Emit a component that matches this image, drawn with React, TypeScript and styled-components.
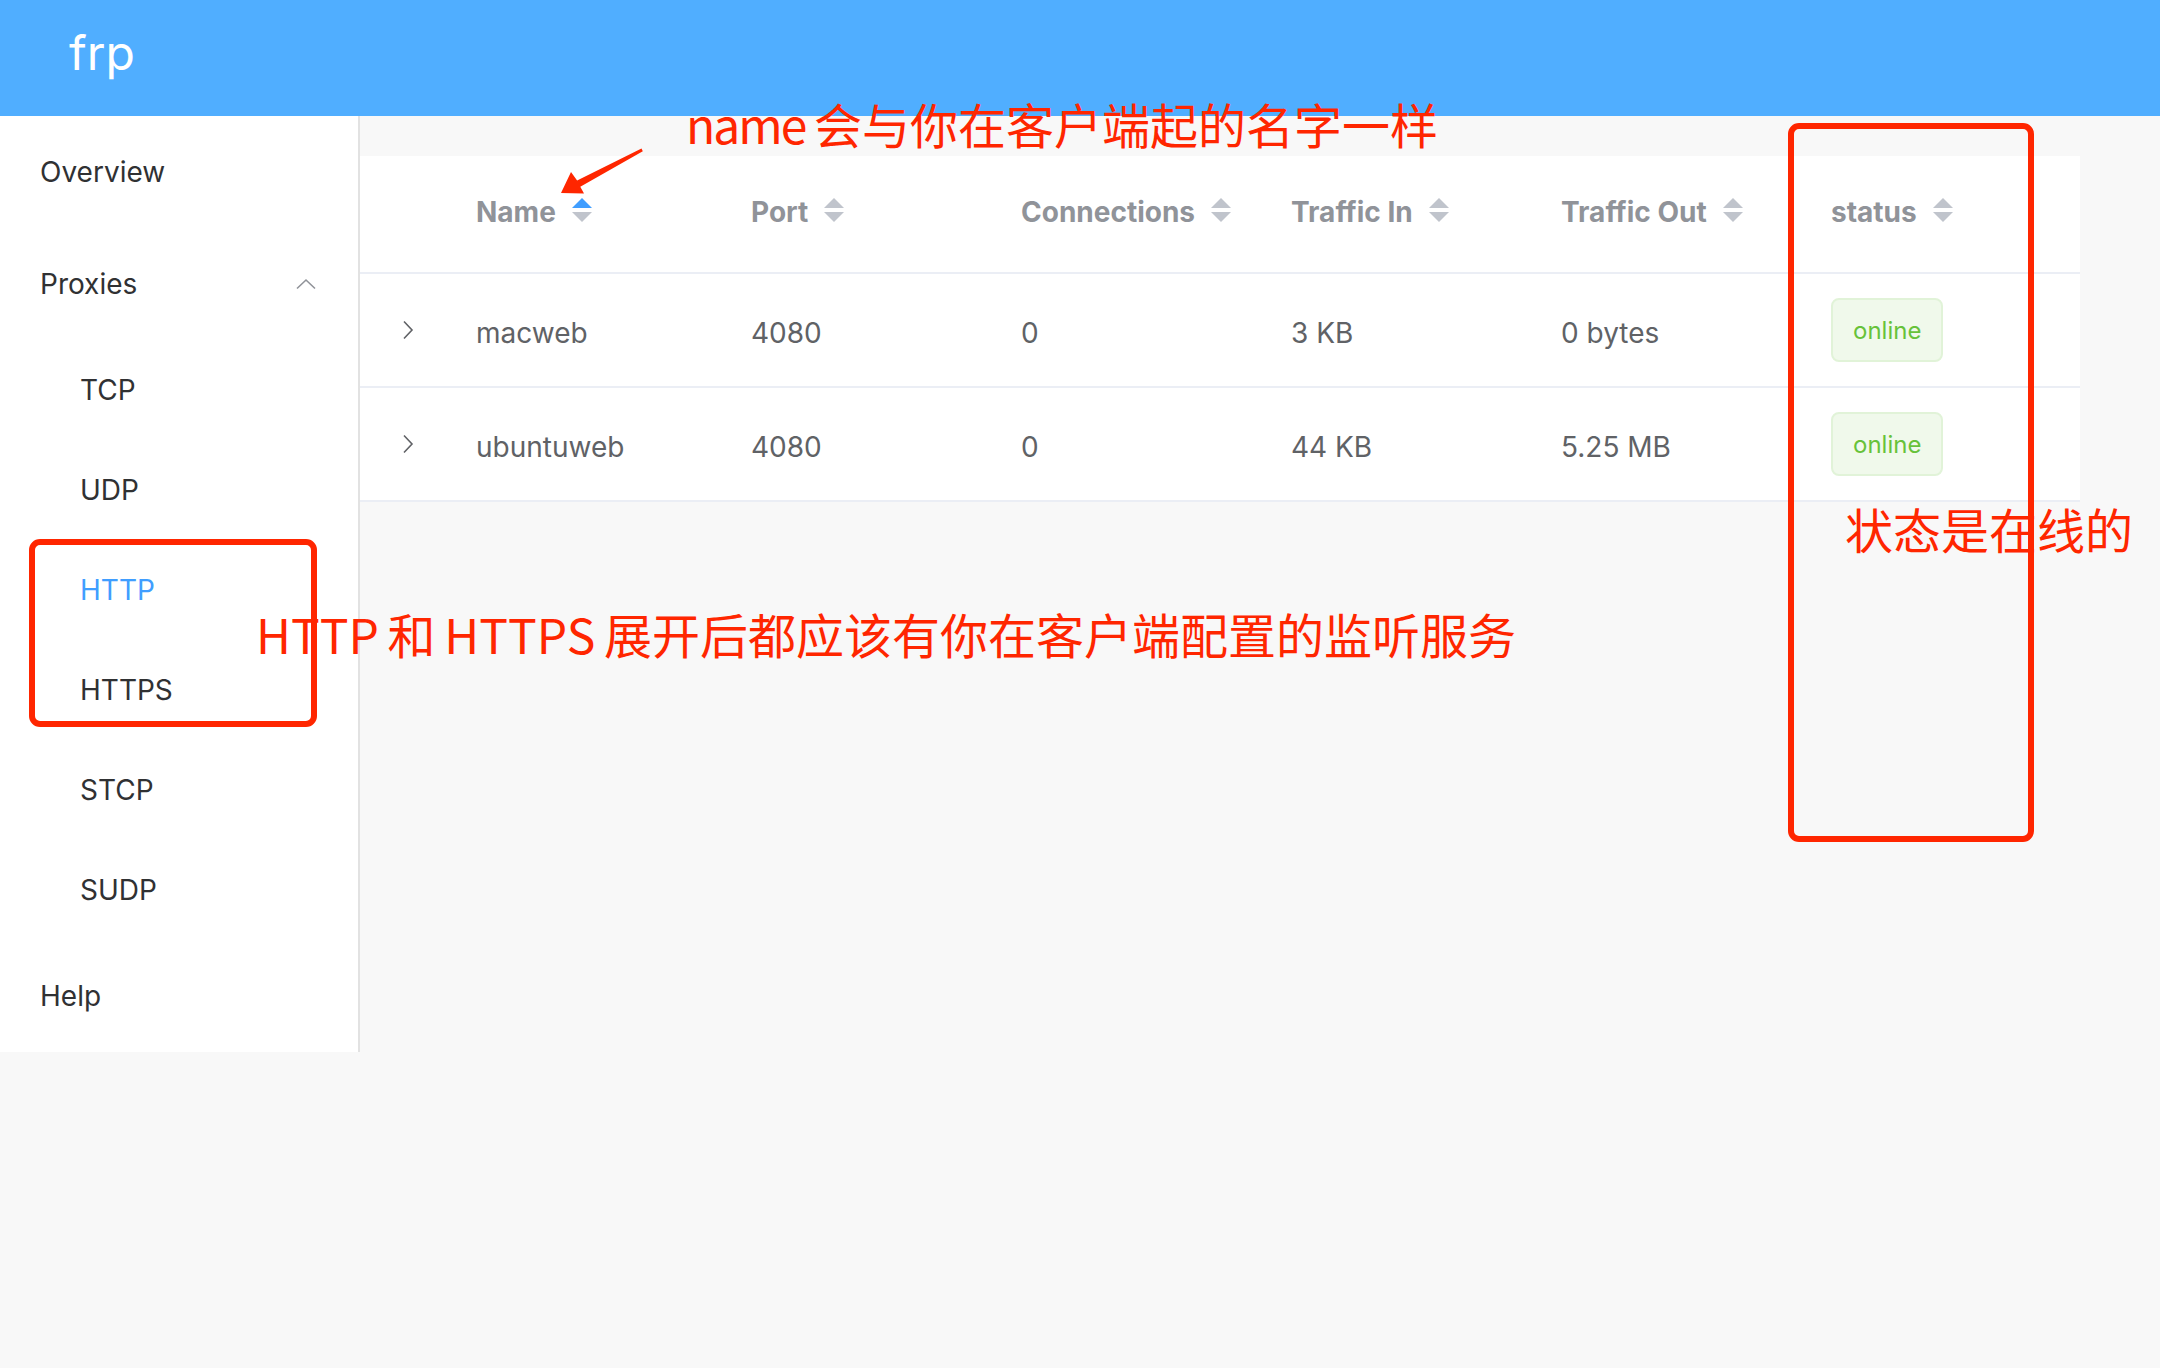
import React from "react";
import styled, { createGlobalStyle } from "styled-components";

const GlobalStyle = createGlobalStyle`
  html, body { margin: 0; padding: 0; background: #f8f8f8; }
  body { font-family: Inter, "Noto Sans", "Noto Sans CJK SC", sans-serif; }
  * { box-sizing: border-box; }
`;

const Page = styled.div`
  position: relative;
  width: 2160px;
  min-height: 1368px;
  background: #f8f8f8;
`;

const Header = styled.header`
  height: 116px;
  background: #50aeff;
  display: flex;
  align-items: center;
  padding: 0 0 10px 69px;
`;

const Brand = styled.a`
  color: #ffffff;
  font-family: Inter, "Noto Sans", sans-serif;
  font-size: 48px;
  line-height: 1;
  text-decoration: none;
`;

const Body = styled.div`
  display: flex;
  align-items: flex-start;
`;

const Sidebar = styled.nav`
  width: 360px;
  flex: none;
  background: #ffffff;
  border-right: 2px solid #e2e2e2;
  display: flex;
  flex-direction: column;
`;

const MenuItem = styled.div<{ $sub?: boolean; $active?: boolean }>`
  height: ${(p) => (p.$sub ? 100 : 112)}px;
  display: flex;
  align-items: center;
  justify-content: space-between;
  padding: 0 42px 0 ${(p) => (p.$sub ? 80 : 40)}px;
  font-size: 28px;
  color: ${(p) => (p.$active ? "#409eff" : "#303133")};
`;

const Main = styled.main`
  flex: 1;
  padding: 40px 80px 0 0;
`;

const Table = styled.div`
  width: 1720px;
  background: #ffffff;
`;

const Row = styled.div<{ $head?: boolean }>`
  display: grid;
  grid-template-columns: 96px 275px 270px 270px 270px 270px 269px;
  height: ${(p) => (p.$head ? 118 : 114)}px;
  border-bottom: 2px solid #ebeef5;
  align-items: center;
`;

const HeadCell = styled.div`
  display: flex;
  align-items: center;
  padding-left: 20px;
  font-size: 28px;
  font-weight: 700;
  color: #909399;
  padding-bottom: 4px;
`;

const Cell = styled.div<{ $center?: boolean; $text?: boolean }>`
  display: flex;
  align-items: center;
  justify-content: ${(p) => (p.$center ? "center" : "flex-start")};
  padding-left: ${(p) => (p.$center ? 0 : 20)}px;
  padding-top: ${(p) => (p.$text ? 5 : 0)}px;
  font-size: 28px;
  color: #606266;
`;

const Tag = styled.span`
  display: inline-flex;
  align-items: center;
  height: 64px;
  padding: 0 20px;
  font-size: 24px;
  color: #67c23a;
  background: #f0f9eb;
  border: 2px solid #e1f3d8;
  border-radius: 8px;
`;

const CaretSvg = styled.svg`
  flex: none;
  margin-left: 2px;
`;

const Note = styled.div<{ $left: number; $top: number }>`
  position: absolute;
  left: ${(p) => p.$left}px;
  top: ${(p) => p.$top}px;
  color: #ff2600;
  font-family: "Noto Sans CJK SC", "Noto Sans", sans-serif;
  font-size: 48px;
  line-height: 1;
  white-space: nowrap;
  word-spacing: -2px;
`;

const Latin = styled.span`
  letter-spacing: -2px;
`;

const RedBox = styled.div<{ $left: number; $top: number; $w: number; $h: number }>`
  position: absolute;
  left: ${(p) => p.$left}px;
  top: ${(p) => p.$top}px;
  width: ${(p) => p.$w}px;
  height: ${(p) => p.$h}px;
  border: 6px solid #ff2600;
  border-radius: 11px;
`;

const ArrowSvg = styled.svg`
  position: absolute;
  left: 555px;
  top: 145px;
`;

const SortCaret = ({ active }: { active?: boolean }) => (
  <CaretSvg width="48" height="68" viewBox="0 0 48 68">
    <polygon points="14,30 34,30 24,20" fill={active ? "#409eff" : "#c0c4cc"} />
    <polygon points="14,34 34,34 24,44" fill="#c0c4cc" />
  </CaretSvg>
);

const ChevronUp = () => (
  <svg width="20" height="12" viewBox="0 0 20 12">
    <polyline points="1,10.5 10,2 19,10.5" fill="none" stroke="#909399" strokeWidth="1.6" />
  </svg>
);

const ChevronRight = () => (
  <svg width="12" height="20" viewBox="0 0 12 20">
    <polyline points="2,1.5 10,10 2,18.5" fill="none" stroke="#606266" strokeWidth="1.6" />
  </svg>
);

const columns = ["Name", "Port", "Connections", "Traffic In", "Traffic Out", "status"];

const proxies = [
  { name: "macweb", port: "4080", conns: "0", tin: "3 KB", tout: "0 bytes", status: "online" },
  { name: "ubuntuweb", port: "4080", conns: "0", tin: "44 KB", tout: "5.25 MB", status: "online" },
];

const subItems = ["TCP", "UDP", "HTTP", "HTTPS", "STCP", "SUDP"];

export default function App() {
  return (
    <Page>
      <GlobalStyle />
      <Header>
        <Brand href="#">frp</Brand>
      </Header>
      <Body>
        <Sidebar>
          <MenuItem>Overview</MenuItem>
          <MenuItem>
            <span>Proxies</span>
            <ChevronUp />
          </MenuItem>
          {subItems.map((s) => (
            <MenuItem key={s} $sub $active={s === "HTTP"}>
              {s}
            </MenuItem>
          ))}
          <MenuItem>Help</MenuItem>
        </Sidebar>
        <Main>
          <Table>
            <Row $head>
              <HeadCell />
              {columns.map((c, i) => (
                <HeadCell key={c}>
                  {c}
                  <SortCaret active={i === 0} />
                </HeadCell>
              ))}
            </Row>
            {proxies.map((p) => (
              <Row key={p.name}>
                <Cell $center>
                  <ChevronRight />
                </Cell>
                <Cell $text>{p.name}</Cell>
                <Cell $text>{p.port}</Cell>
                <Cell $text>{p.conns}</Cell>
                <Cell $text>{p.tin}</Cell>
                <Cell $text>{p.tout}</Cell>
                <Cell>
                  <Tag>{p.status}</Tag>
                </Cell>
              </Row>
            ))}
          </Table>
        </Main>
      </Body>

      <Note $left={686} $top={99}>
        <Latin>name</Latin> 会与你在客户端起的名字一样
      </Note>
      <ArrowSvg width="100" height="60" viewBox="0 0 100 60">
        <polygon
          points="86.5,3.6 22.1,35.5 16,27 6,48 29,48.5 25.3,41.7 87.8,6.2"
          fill="#ff2600"
        />
      </ArrowSvg>
      <RedBox $left={1788} $top={123} $w={246} $h={719} />
      <RedBox $left={29} $top={539} $w={288} $h={188} />
      <Note $left={256} $top={609}>HTTP 和 HTTPS 展开后都应该有你在客户端配置的监听服务</Note>
      <Note $left={1845} $top={504}>状态是在线的</Note>
    </Page>
  );
}
